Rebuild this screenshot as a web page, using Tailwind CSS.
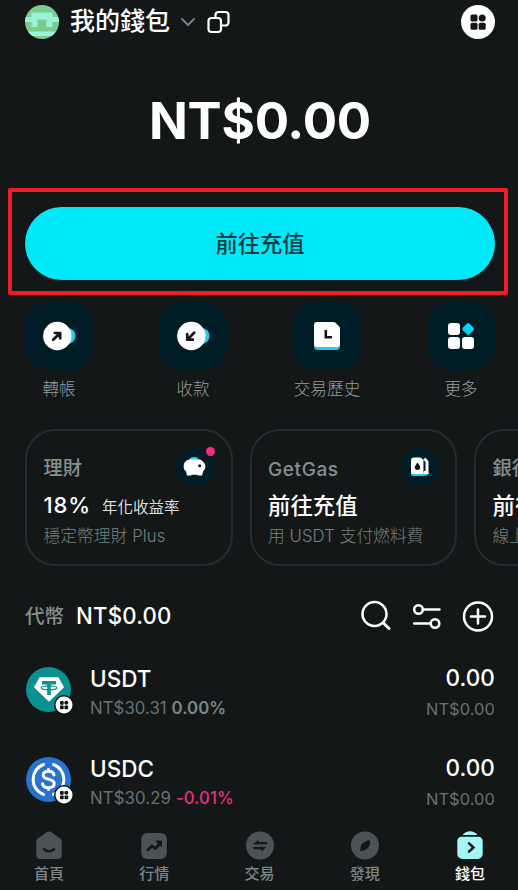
<!DOCTYPE html>
<html lang="zh-Hant">
<head>
<meta charset="utf-8">
<meta name="viewport" content="width=device-width, initial-scale=1">
<title>我的錢包</title>
<script src="https://cdn.jsdelivr.net/npm/@tailwindcss/browser@4"></script>
</head>
<body class="bg-[#141718] font-['Inter','Noto_Sans_CJK_TC',sans-serif] text-white">
<div class="flex h-[890px] w-[518px] flex-col overflow-hidden">

  <header class="flex h-11 shrink-0 items-center pr-[23px] pl-[25px]">
    <svg class="-mt-px size-[34px]" viewBox="0 0 34 34">
      <clipPath id="av"><circle cx="17" cy="17" r="17"/></clipPath>
      <g clip-path="url(#av)">
        <path fill="#7acb8c" d="M0 0h34v34H0z"/>
        <path fill="#97f4d6" d="M6.500 7.500h21V12H34v5h-6.500v5h-6v-7.500h-9V22h-6v-5H0v-5h6.500zM0 26.500h34V31H0z"/>
      </g>
    </svg>
    <h1 class="ml-[11px] text-[25px]/[34px] font-medium -mt-[3px]">我的錢包</h1>
    <svg class="ml-[10px] h-4 w-4" viewBox="0 0 16 16" fill="none" stroke="#7b8586" stroke-width="1.800" stroke-linecap="round" stroke-linejoin="round"><path d="m2 5 6 6 6-6"/></svg>
    <svg class="ml-[11px] size-[24px]" viewBox="0 0 24 24" fill="none" stroke="#fff" stroke-width="2.200" stroke-linejoin="round" stroke-linecap="round"><rect x="1.500" y="8" width="12.500" height="14" rx="3"/><path d="M8.500 8V5a3 3 0 0 1 3-3H18.500a3 3 0 0 1 3 3v7.500a3 3 0 0 1-3 3H14"/></svg>
    <svg class="-mt-px ml-auto size-[34px]" viewBox="0 0 34 34"><circle cx="17" cy="17" r="17" fill="#fff"/><g fill="#141718"><rect x="9.500" y="9.500" width="7" height="7" rx="1.500"/><circle cx="21.200" cy="13" r="3.500"/><rect x="9.500" y="17.700" width="7" height="7" rx="1.500"/><rect x="17.700" y="17.700" width="7" height="7" rx="1.500"/></g></svg>
  </header>

  <div class="flex h-[144px] shrink-0 items-center justify-center pt-[10px] pl-[2px]">
    <div class="text-[51px]/[60px] font-bold -tracking-[0.200px]">NT$0.00</div>
  </div>

  <div class="mx-2 mr-[10px] flex h-[107px] shrink-0 items-center rounded-[2px] border-4 border-[#ee1c25] px-[13px]">
    <button class="mt-[4px] mr-[-4px] h-[73px] w-[470px] shrink-0 rounded-full bg-[#00e9f8] text-[22.300px] font-medium text-[#0e3a42]">前往充值</button>
  </div>

  <nav class="flex h-[134px] shrink-0 justify-between pr-[23px] pl-[25px] pt-[7px]">
    <div class="flex w-[68px] flex-col items-center">
      <div class="flex h-[68px] w-[68px] items-center justify-center rounded-[22px] bg-[#001d27]">
        <svg class="h-[34px] w-[34px]" viewBox="0 0 34 34"><circle cx="25.500" cy="17" r="8" fill="#1bd0ec"/><circle cx="15.300" cy="17" r="14.200" fill="#fff"/><path d="m11.200 20.800 6.300-6.300M12.900 14h5.300v5.300" fill="none" stroke="#141718" stroke-width="2.700" stroke-linecap="round" stroke-linejoin="round"/></svg>
      </div>
      <span class="mt-[7px] text-[16.500px]/[24px] font-light whitespace-nowrap text-[#929b9b]">轉帳</span>
    </div>
    <div class="flex w-[68px] flex-col items-center">
      <div class="flex h-[68px] w-[68px] items-center justify-center rounded-[22px] bg-[#001d27]">
        <svg class="h-[34px] w-[34px]" viewBox="0 0 34 34"><circle cx="25.500" cy="17" r="8" fill="#1bd0ec"/><circle cx="15.300" cy="17" r="14.200" fill="#fff"/><path d="m18.200 13.800-6.300 6.300M11.200 15v5.700h5.700" fill="none" stroke="#141718" stroke-width="2.700" stroke-linecap="round" stroke-linejoin="round"/></svg>
      </div>
      <span class="mt-[7px] text-[16.500px]/[24px] font-light whitespace-nowrap text-[#929b9b]">收款</span>
    </div>
    <div class="flex w-[68px] flex-col items-center">
      <div class="flex h-[68px] w-[68px] items-center justify-center rounded-[22px] bg-[#001d27]">
        <svg class="h-[34px] w-[34px]" viewBox="0 0 34 34"><rect x="4" y="10" width="26" height="21" rx="4" fill="#1bd0ec"/><path fill="#fff" d="M7 3h16.500q1.200 0 2 .8L29 7.300q1 1 1 2.200v15a3.500 3.500 0 0 1-3.500 3.500h-19A3.500 3.500 0 0 1 4 24.500V6a3 3 0 0 1 3-3z"/><path d="M15.800 11v7.300H22" fill="none" stroke="#141718" stroke-width="2.600"/></svg>
      </div>
      <span class="mt-[7px] text-[16.700px]/[24px] font-light whitespace-nowrap text-[#929b9b]">交易歷史</span>
    </div>
    <div class="flex w-[68px] flex-col items-center">
      <div class="flex h-[68px] w-[68px] items-center justify-center rounded-[22px] bg-[#001d27]">
        <svg class="h-[34px] w-[34px]" viewBox="0 0 34 34"><g fill="#fff"><rect x="4" y="4" width="12" height="12" rx="3"/><rect x="4" y="18" width="12" height="12" rx="3"/><rect x="18" y="18" width="12" height="12" rx="3"/></g><rect x="19.500" y="5.300" width="9.400" height="9.400" rx="2" fill="#06cff0" transform="rotate(45 24.200 10)"/></svg>
      </div>
      <span class="mt-[7px] text-[16.500px]/[24px] font-light whitespace-nowrap text-[#929b9b]">更多</span>
    </div>
  </nav>

  <section class="flex h-[137px] shrink-0 gap-[17px] pl-[25px]">
    <article class="relative h-[137px] w-[207.500px] shrink-0 rounded-[30px] border-2 border-[#262b2d] pt-[17px] pl-[16.500px]">
      <svg class="absolute top-[16px] left-[149px] size-[40px]" viewBox="0 0 40 40"><circle cx="19" cy="20" r="19" fill="#001d27"/><circle cx="18" cy="15.500" r="5.800" fill="#1bd0ec"/><path fill="#fff" d="M14 12.500h9c1.700 0 3 .8 4 2.300 1.200.5 2.300 2.700 2.300 4.900s-1 3.500-2 4.200L26 28.500h-4l-.7-.8h-5.500l-.8.800h-4L10 24.500c-1.800-1.500-2.300-3-2.300-5 0-4 2.500-7 6.300-7z"/><circle cx="23.700" cy="18.800" r="1.500" fill="#141718"/></svg>
      <i class="absolute top-[15.500px] left-[179px] size-[9px] rounded-full bg-[#f42d7d]"></i>
      <h2 class="pt-px text-[19.200px]/[38px] font-medium text-[#83908f]">理財</h2>
      <p class="flex h-9 items-center pt-px text-[22px] font-medium tracking-[0.900px]">18%<span class="ml-[11px] pt-[5px] text-[15.500px] font-normal tracking-normal text-[#dadddd]">年化收益率</span></p>
      <p class="text-[16.700px]/[26px] tracking-[0.100px] font-light text-[#728080]">穩定幣理財 Plus</p>
    </article>
    <article class="relative h-[137px] w-[207.500px] shrink-0 rounded-[30px] border-2 border-[#262b2d] pt-[17px] pl-[16.500px]">
      <svg class="absolute top-[16px] left-[149px] size-[40px]" viewBox="0 0 40 40"><circle cx="19" cy="20" r="19" fill="#001d27"/><path fill="#1bd0ec" d="M10 25h13v4H12a2 2 0 0 1-2-2zM23 25h4.500v2l-2 1.800H23z"/><path fill="#fff" d="M13 10.500h6.500L22.500 13v14h-10.500a2 2 0 0 1-2-2V13.500a3 3 0 0 1 3-3z"/><path d="m23.500 11.500 2.500 3.500v10.500h-3" fill="none" stroke="#fff" stroke-width="3"/><path d="M23.500 14.500v7.500" stroke="#141718" stroke-width="1.200"/><path fill="#141718" d="M16.500 15.500c1.300 1.700 2.700 3.300 2.700 4.800a2.700 2.700 0 0 1-5.400 0c0-1.500 1.400-3.100 2.700-4.800z"/></svg>
      <h2 class="-mb-[2px] pt-px text-[19px]/[41px] font-medium tracking-[0.600px] text-[#83908f]">GetGas</h2>
      <p class="h-[35px] text-[22.400px]/[35px] font-medium">前往充值</p>
      <p class="text-[16.700px]/[26px] tracking-[0.100px] font-light text-[#728080]">用 USDT 支付燃料費</p>
    </article>
    <article class="h-[137px] w-[207.500px] shrink-0 rounded-[30px] border-2 border-[#262b2d] pt-[17px] pl-[16.500px]">
      <h2 class="pt-px text-[19.200px]/[38px] font-medium text-[#83908f]">銀行</h2>
      <p class="h-9 text-[22.400px]/[38px] font-medium">前往</p>
      <p class="text-[16.700px]/[26px] font-light text-[#728080]">線上</p>
    </article>
  </section>

  <section class="flex h-[101px] shrink-0 items-center pr-[24px] pl-[25px]">
    <span class="text-[19.500px]/[30px] text-[#83908f] font-medium -mt-[2px]">代幣</span>
    <span class="-mt-[2px] ml-[12px] text-[22.200px]/[30px] font-medium tracking-[0.200px]">NT$0.00</span>
    <div class="ml-auto flex items-center gap-[19px] text-white">
      <svg class="-mt-px size-[32px]" viewBox="0 0 32 32" fill="none" stroke="currentColor" stroke-width="2.500" stroke-linecap="round"><circle cx="14.500" cy="14" r="12"/><path d="m23.500 23 5.500 5.500" stroke-width="3"/></svg>
      <svg class="-mt-px size-[32px]" viewBox="0 0 32 32" fill="none" stroke="currentColor" stroke-width="2.500" stroke-linecap="round"><circle cx="7.500" cy="9.500" r="4.300"/><path d="M12 9.500h16.500M3.200 23.500h16.300"/><circle cx="24" cy="23.500" r="4.300"/></svg>
      <svg class="-mt-px size-[32px]" viewBox="0 0 32 32" fill="none" stroke="currentColor" stroke-width="2.500" stroke-linecap="round"><circle cx="16" cy="16.500" r="14"/><path d="M16 9.500v14M9 16.500h14"/></svg>
    </div>
  </section>

  <main class="flex shrink-0 flex-col">
    <div class="flex h-[90px] pr-[23px] pl-[24px]">
      <svg class="ml-[2px] size-[48px]" viewBox="0 0 48 48"><circle cx="22.500" cy="22.500" r="22.500" fill="#0b9290"/><path fill="#fff" d="M13.500 10.200h19l5.500 10-15 14.500-15-14.500z"/><path fill="#0b9290" d="M16 14h14v3.500h-5.200V28h-3.600V17.500H16z"/><ellipse cx="23" cy="20.800" rx="7.800" ry="2" fill="none" stroke="#0b9290" stroke-width="1.300"/><circle cx="38" cy="38" r="10" fill="#141718"/><circle cx="38" cy="38" r="8.500" fill="#fff"/><g fill="#141718"><rect x="34" y="34" width="3.700" height="3.700" rx=".8"/><circle cx="40.300" cy="35.800" r="2"/><rect x="34" y="38.500" width="3.700" height="3.700" rx=".8"/><rect x="38.500" y="38.500" width="3.700" height="3.700" rx=".8"/></g></svg>
      <div class="ml-[16px] flex flex-col">
        <h3 class="-mt-px text-[22.500px]/[26px] font-medium">USDT</h3>
        <p class="mt-[3px] text-[16.800px]/[26px] tracking-[0.050px] text-[#667271]">NT$30.31 <span class="font-semibold text-[#7b8787]">0.00%</span></p>
      </div>
      <div class="ml-auto flex flex-col items-end">
        <p class="-mt-[2px] text-[22.500px]/[26px] font-medium tracking-[0.100px]">0.00</p>
        <p class="mt-[5px] text-[16.400px]/[26px] tracking-[0.100px] text-[#667271]">NT$0.00</p>
      </div>
    </div>
    <div class="flex h-[72px] pr-[23px] pl-[24px]">
      <svg class="ml-[2px] size-[48px]" viewBox="0 0 48 48"><circle cx="22.500" cy="22.500" r="22.500" fill="#2873cd"/><g fill="none" stroke="#fff" stroke-width="3" stroke-linecap="round"><path d="M17.500 7.500a16 16 0 0 0 0 30M27.500 7.500a16 16 0 0 1 0 30"/><path d="M28 18c-.5-2.500-2.500-3.700-5.500-3.700s-5.300 1.400-5.300 4c0 5.500 11 2.500 11 8.200 0 2.700-2.300 4.200-5.700 4.200s-5.500-1.400-6-4M22.500 12.500v1.800M22.500 30.700v1.800"/></g><circle cx="38" cy="38" r="10" fill="#141718"/><circle cx="38" cy="38" r="8.500" fill="#fff"/><g fill="#141718"><rect x="34" y="34" width="3.700" height="3.700" rx=".8"/><circle cx="40.300" cy="35.800" r="2"/><rect x="34" y="38.500" width="3.700" height="3.700" rx=".8"/><rect x="38.500" y="38.500" width="3.700" height="3.700" rx=".8"/></g></svg>
      <div class="ml-[16px] flex flex-col">
        <h3 class="-mt-px text-[22.500px]/[26px] font-medium">USDC</h3>
        <p class="mt-[3px] text-[16.800px]/[26px] tracking-[0.100px] text-[#667271]">NT$30.29 <span class="font-medium text-[#e5317d]">-0.01%</span></p>
      </div>
      <div class="ml-auto flex flex-col items-end">
        <p class="-mt-[2px] text-[22.500px]/[26px] font-medium tracking-[0.100px]">0.00</p>
        <p class="mt-[5px] text-[16.400px]/[26px] tracking-[0.100px] text-[#667271]">NT$0.00</p>
      </div>
    </div>
  </main>

  <footer class="flex grow justify-between pr-[23px] pl-[24px] pt-px text-[15px]/[22px] font-medium text-[#7b8787]">
    <div class="flex w-[50px] flex-col items-center"><svg class="size-[30px]" viewBox="0 0 30 30"><path fill="#4a5356" d="M12.800 2.200c1.400-.9 3-.9 4.400 0l8.800 6c1.100.8 1.700 1.700 1.700 3V25a4 4 0 0 1-4 4H6.300a4 4 0 0 1-4-4V11.200c0-1.300.6-2.200 1.700-3z"/><path d="M10 19.300c3 2.600 7 2.600 10 0" fill="none" stroke="#141718" stroke-width="2.500" stroke-linecap="round"/></svg><span class="mt-[3px]">首頁</span></div>
    <div class="flex w-[50px] flex-col items-center"><svg class="size-[30px]" viewBox="0 0 30 30"><rect x="2.300" y="3" width="25.500" height="26" rx="6" fill="#4a5356"/><path d="m8 20.500 5-4.500 3.500 2.500 5-5.500" fill="none" stroke="#141718" stroke-width="2.800"/><path fill="#141718" d="M16 10.500h7v7z"/></svg><span class="mt-[3px]">行情</span></div>
    <div class="flex w-[50px] flex-col items-center"><svg class="size-[30px]" viewBox="0 0 30 30"><circle cx="15" cy="15.500" r="14" fill="#4a5356"/><path fill="#141718" d="m8.500 14 5-4.300V12h8.500v2.300H8.500zM21.500 17l-5 4.500v-2.300H8.500V17z"/></svg><span class="mt-[3px]">交易</span></div>
    <div class="flex w-[50px] flex-col items-center"><svg class="size-[30px]" viewBox="0 0 30 30"><circle cx="15" cy="15.500" r="14" fill="#4a5356"/><path fill="#141718" d="M20 10.200c.6 3.500-.5 6.200-2.300 8-1.700 1.500-4.200 2.500-7.500 2.800 0-3.500.6-5.500 2.300-7.500 1.800-2 4.700-3.300 7.500-3.300z"/></svg><span class="mt-[3px]">發現</span></div>
    <div class="flex w-[50px] flex-col items-center text-white"><svg class="size-[30px]" viewBox="0 0 30 30"><path fill="#a5f6f7" d="M7.500 5C9.500 2.500 12 1.300 15 1.300s5.500 1.200 7.500 3.700zM7 6.700h16c3 0 4.700 2 4.700 4.800V24a5 5 0 0 1-5 5H7.300a5 5 0 0 1-5-5V11.500c0-2.800 1.700-4.800 4.700-4.800z"/><path d="m14 13.300 4.500 4.200-4.500 4.200" fill="none" stroke="#141718" stroke-width="2.500" stroke-linecap="round"/></svg><span class="mt-[3px]">錢包</span></div>
  </footer>
</div>
</body>
</html>
